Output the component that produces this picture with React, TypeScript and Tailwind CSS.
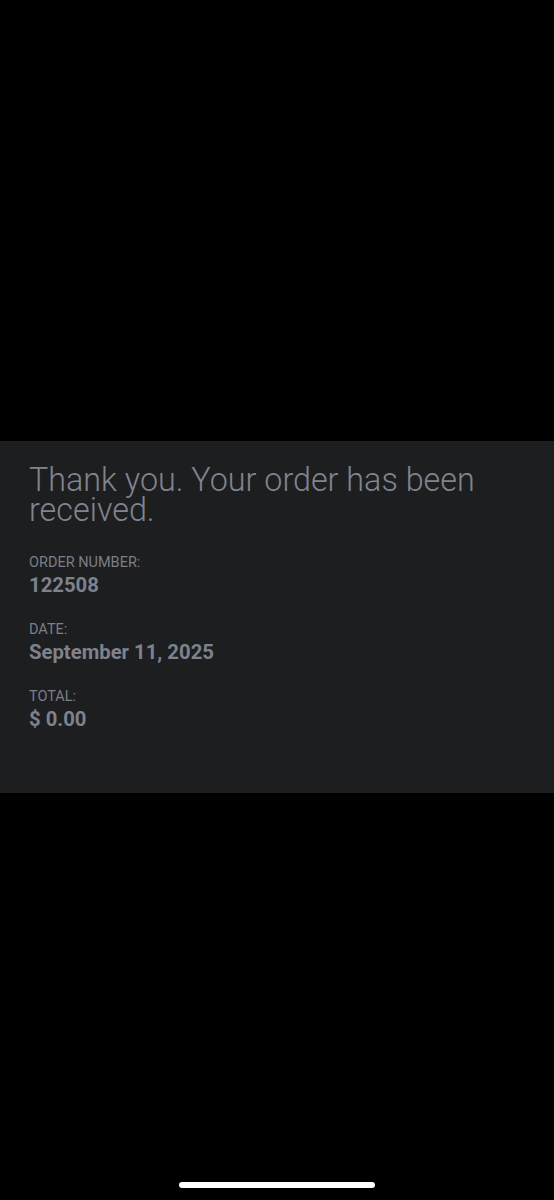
export default function App() {
  const rows = [
    { label: "ORDER NUMBER:", value: "122508" },
    { label: "DATE:", value: "September 11, 2025" },
    { label: "TOTAL:", value: "$ 0.00" },
  ];

  return (
    <div className="w-full h-[1200px] bg-black flex flex-col font-['Roboto',sans-serif]">
      <div className="h-[441px]" />
      <div className="bg-[#1d1e20] px-[29px] pt-[24px] pb-[62px]">
        <h1 className="text-[32.3px] leading-[30px] font-light text-[#80848e]">
          Thank you. Your order has been received.
        </h1>
        <div className="mt-[28px] flex flex-col gap-[23px]">
          {rows.map((r) => (
            <div key={r.label}>
              <div className="text-[14.5px] leading-5 text-[#7b7f88]">{r.label}</div>
              <div className="text-[20.3px] leading-6 font-bold text-[#7e828c]">{r.value}</div>
            </div>
          ))}
        </div>
      </div>
      <div className="flex-1 flex items-end justify-center pb-[12px]">
        <div className="w-[196px] h-[6px] rounded-full bg-white" />
      </div>
    </div>
  );
}
